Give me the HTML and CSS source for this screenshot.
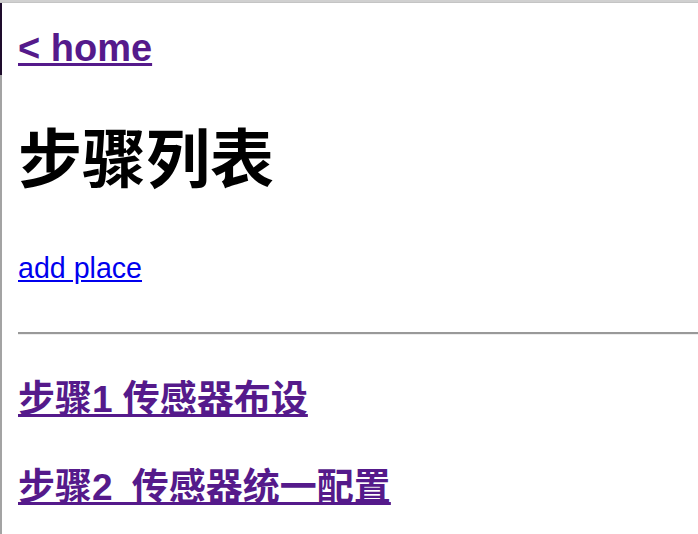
FILE: index.html
```html
<!DOCTYPE html>
<html lang="zh">
<head>
<meta charset="utf-8">
<title>步骤列表</title>
<link rel="stylesheet" href="styles.css">
</head>
<body>
<div class="chrome-top"></div>
<div class="page">
  <a class="home-link" href="#">&lt; home</a>
  <h1 class="title">步骤列表</h1>
  <a class="add-link" href="#">add place</a>
  <hr class="divider">
  <h3 class="step"><a href="#">步骤1 传感器布设</a></h3>
  <h3 class="step step-wide"><a href="#">步骤2 传感器统一配置</a></h3>
</div>
</body>
</html>
```

FILE: styles.css
```css
html, body {
  margin: 0;
  padding: 0;
  background: #ffffff;
  overflow: hidden;
}

body {
  font-family: "Liberation Sans", "Noto Sans CJK SC", sans-serif;
  color: #000000;
  height: 534px;
}

.chrome-top {
  height: 3px;
  background: #d0d0d0;
  border-bottom: 1px solid #c4c4c4;
  box-sizing: border-box;
}

.page {
  position: relative;
  border-left: 2px solid #a3a3a3;
  padding-left: 16px;
  height: 531px;
  box-sizing: border-box;
  display: flex;
  flex-direction: column;
  align-items: flex-start;
}

.page::before {
  content: "";
  position: absolute;
  left: -2px;
  top: 0;
  width: 2px;
  height: 72px;
  background: #1e0c2c;
}

.home-link {
  display: block;
  margin-top: 26px;
  font-size: 38px;
  line-height: 38px;
  font-weight: bold;
  color: #551a8b;
}

.title {
  margin: 61px 0 0 0;
  font-size: 64px;
  line-height: 64px;
  font-weight: bold;
}

.add-link {
  display: block;
  margin-top: 62px;
  font-size: 28.6px;
  line-height: 28px;
  color: #0000ee;
}

.divider {
  align-self: stretch;
  margin: 50px 0 0 0;
  height: 0;
  border: 0;
  border-top: 2px solid #999999;
  border-bottom: 1px solid #eeeeee;
}

.step {
  margin: 46px 0 0 0;
  font-size: 37px;
  line-height: 37px;
  font-weight: bold;
}

.step-wide {
  margin-top: 51px;
  word-spacing: 9px;
}

.step a {
  color: #551a8b;
}
```
